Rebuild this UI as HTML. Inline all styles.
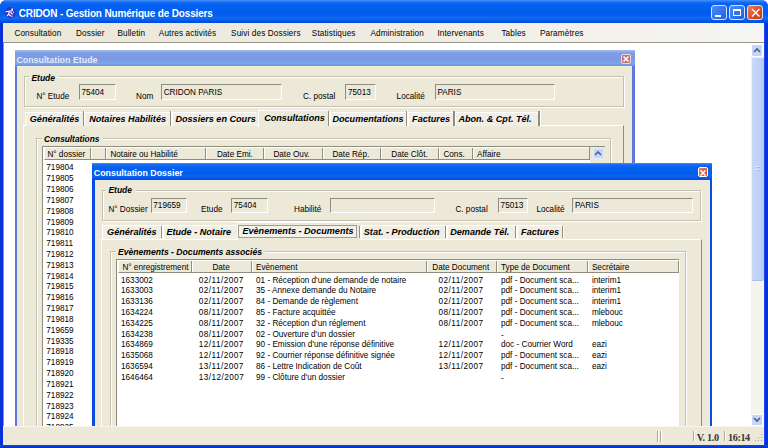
<!DOCTYPE html>
<html><head><meta charset="utf-8">
<style>
*{margin:0;padding:0;box-sizing:border-box}
html,body{width:768px;height:448px;overflow:hidden;background:#fff}
body{position:relative;font-family:"Liberation Sans",sans-serif;font-size:8.2px;color:#000}
.a{position:absolute}
.t{position:absolute;white-space:nowrap;line-height:1}
#clip{position:absolute;left:4px;top:42px;width:760px;height:385px;overflow:hidden}
#w{position:absolute;left:0;top:0;width:768px;height:448px}
</style></head><body><div id="w">
<div class="a" style="left:0.00px;top:0.00px;width:768px;height:448px;background:#0831D9;border-radius:7px 7px 0 0"></div>
<div class="a" style="left:0.00px;top:0.00px;width:768px;height:23px;background:linear-gradient(#4A93F9 0px,#1A6DF5 2px,#0662F1 4px,#005CED 14px,#1269F3 18px,#0058E8 21px,#0049D8 23px);border-radius:6px 6px 0 0"></div>
<svg class="a" style="left:4.00px;top:6.00px" width="13" height="13"><circle cx="6.3" cy="6.5" r="5.4" fill="#3032C6"/><path d="M2 5.8L5 5.2L8.5 4.6M5.2 5.2L4.6 8.3L6.6 9.8M4.6 8.3L3.2 9.6M6.8 6.5L8.4 8.2" stroke="#fff" stroke-width="1.1" fill="none" stroke-linecap="round"/><circle cx="8.3" cy="3.2" r="0.9" fill="#fff"/><circle cx="9.6" cy="6.2" r="0.7" fill="#DDE"/><circle cx="7.8" cy="10.2" r="0.7" fill="#DDE"/></svg>
<div class="t " style="left:18.80px;top:9.20px;font-size:10px;color:#fff;font-weight:bold;letter-spacing:-0.16px">CRIDON - Gestion Numérique de Dossiers</div>
<div class="a" style="left:711.00px;top:5.00px;width:16px;height:15px;background:linear-gradient(135deg,#4C8CFA,#1F5FE0);border:1px solid #D8E4FA;border-radius:3px"></div>
<div class="a" style="left:715.00px;top:15.00px;width:6px;height:2px;background:#fff;"></div>
<div class="a" style="left:729.00px;top:5.00px;width:16px;height:15px;background:linear-gradient(135deg,#4C8CFA,#1F5FE0);border:1px solid #D8E4FA;border-radius:3px"></div>
<div class="a" style="left:733.00px;top:9.00px;width:8px;height:7px;background:transparent;border:1px solid #fff;border-top:2px solid #fff"></div>
<div class="a" style="left:747.00px;top:5.00px;width:16px;height:15px;background:linear-gradient(135deg,#EC7E5A,#DC4A22 60%,#C83C14);border:1px solid #D8E4FA;border-radius:3px"></div>
<svg class="a" style="left:750.50px;top:8.00px" width="9.5" height="9.5"><path d="M1 1L8.5 8.5M8.5 1L1 8.5" stroke="#fff" stroke-width="1.5"/></svg>
<div class="a" style="left:3.00px;top:23.00px;width:761px;height:19px;background:linear-gradient(90deg,#EBE8D8 0%,#EEECE2 45%,#F3F2EC 80%,#F5F5F4 100%);"></div>
<div class="a" style="left:3.00px;top:41.50px;width:761px;height:385px;background:#fff;border-top:1.5px solid #9A9787;border-left:1.2px solid #9A9787"></div>
<div class="t " style="left:14.40px;top:30.00px;font-size:8.2px;letter-spacing:0.12px">Consultation</div>
<div class="t " style="left:76.00px;top:30.00px;font-size:8.2px;letter-spacing:0.12px">Dossier</div>
<div class="t " style="left:117.40px;top:30.00px;font-size:8.2px;letter-spacing:0.12px">Bulletin</div>
<div class="t " style="left:158.80px;top:30.00px;font-size:8.2px;letter-spacing:0.12px">Autres activités</div>
<div class="t " style="left:231.10px;top:30.00px;font-size:8.2px;letter-spacing:0.12px">Suivi des Dossiers</div>
<div class="t " style="left:311.80px;top:30.00px;font-size:8.2px;letter-spacing:0.12px">Statistiques</div>
<div class="t " style="left:370.40px;top:30.00px;font-size:8.2px;letter-spacing:0.12px">Administration</div>
<div class="t " style="left:437.40px;top:30.00px;font-size:8.2px;letter-spacing:0.12px">Intervenants</div>
<div class="t " style="left:501.40px;top:30.00px;font-size:8.2px;letter-spacing:0.12px">Tables</div>
<div class="t " style="left:540.00px;top:30.00px;font-size:8.2px;letter-spacing:0.12px">Paramètres</div>
<div class="a" style="left:4px;top:42px;width:747px;height:385px;overflow:hidden">
<div class="a" style="left:11.00px;top:8.00px;width:620px;height:398px;background:#5E78DC;"></div>
<div class="a" style="left:11.00px;top:8.00px;width:620px;height:16px;background:linear-gradient(#A3BBF0 0px,#7F9EE7 3px,#7898E2 9px,#7BA2E8 12px,#7DA6EA 14px,#6888DC 16px);"></div>
<div class="t " style="left:12.40px;top:13.60px;font-size:8.85px;color:#E2EAFB;font-weight:bold">Consultation Etude</div>
<div class="a" style="left:617.00px;top:12.00px;width:10px;height:10px;background:#C0707E;border:1px solid #F0D8D8;border-radius:2px"></div>
<svg class="a" style="left:619.00px;top:14.00px" width="6" height="6"><path d="M0.5 0.5L5.5 5.5M5.5 0.5L0.5 5.5" stroke="#fff" stroke-width="1.5"/></svg>
<div class="a" style="left:13.00px;top:24.00px;width:615px;height:382px;background:#ECE9D8;"></div>
<div class="a" style="left:13.00px;top:24.00px;width:615px;height:1px;background:#F6F1DA;"></div>
<div class="a" style="left:19.50px;top:34.30px;width:600.5px;height:31.2px;background:transparent;border:1px solid #C4C0B2;box-shadow:inset 1px 1px 0 #fff, 1px 1px 0 #fff"></div>
<div class="a" style="left:25.00px;top:30.30px;width:30px;height:9px;background:#ECE9D8;"></div>
<div class="t " style="left:27.40px;top:31.50px;font-size:8.5px;font-weight:bold;font-style:italic;">Etude</div>
<div class="t " style="left:32.40px;top:51.30px;font-size:8.2px;">N° Etude</div>
<div class="a" style="left:75.00px;top:42.00px;width:37px;height:15.5px;background:#ECE9D8;border-top:1.5px solid #8F8C80;border-left:1.5px solid #8F8C80;border-bottom:1px solid #FFFFFF;border-right:1px solid #FFFFFF"></div>
<div class="t " style="left:77.40px;top:46.90px;font-size:8.2px;">75404</div>
<div class="t " style="left:132.10px;top:51.00px;font-size:8.2px;">Nom</div>
<div class="a" style="left:157.40px;top:42.00px;width:120.4px;height:15.5px;background:#ECE9D8;border-top:1.5px solid #8F8C80;border-left:1.5px solid #8F8C80;border-bottom:1px solid #FFFFFF;border-right:1px solid #FFFFFF"></div>
<div class="t " style="left:159.70px;top:46.90px;font-size:8.2px;">CRIDON PARIS</div>
<div class="t " style="left:299.00px;top:51.00px;font-size:8.2px;">C. postal</div>
<div class="a" style="left:341.30px;top:42.00px;width:31px;height:15.5px;background:#ECE9D8;border-top:1.5px solid #8F8C80;border-left:1.5px solid #8F8C80;border-bottom:1px solid #FFFFFF;border-right:1px solid #FFFFFF"></div>
<div class="t " style="left:344.00px;top:46.90px;font-size:8.2px;">75013</div>
<div class="t " style="left:392.60px;top:51.00px;font-size:8.2px;">Localité</div>
<div class="a" style="left:430.90px;top:42.00px;width:120.5px;height:15.5px;background:#ECE9D8;border-top:1.5px solid #8F8C80;border-left:1.5px solid #8F8C80;border-bottom:1px solid #FFFFFF;border-right:1px solid #FFFFFF"></div>
<div class="t " style="left:433.40px;top:46.90px;font-size:8.2px;">PARIS</div>
<div class="a" style="left:19.00px;top:83.30px;width:601px;height:322.7px;background:transparent;border-left:1px solid #fff;border-top:1px solid #fff;border-right:1.5px solid #8F8C80"></div>
<div class="a" style="left:21.20px;top:69.50px;width:57.3px;height:14px;background:#F0EEE5;border-top:1px solid #fff;border-left:1px solid #fff"></div>
<div class="a" style="left:80.00px;top:69.50px;width:86.0px;height:14px;background:#F0EEE5;border-top:1px solid #fff;border-left:1px solid #fff"></div>
<div class="a" style="left:167.50px;top:69.50px;width:85.0px;height:14px;background:#F0EEE5;border-top:1px solid #fff;border-left:1px solid #fff"></div>
<div class="a" style="left:253.50px;top:67.50px;width:70.5px;height:17px;background:#ECE9D8;border-top:1px solid #fff;border-left:1px solid #fff"></div>
<div class="a" style="left:325.50px;top:69.50px;width:76.5px;height:14px;background:#F0EEE5;border-top:1px solid #fff;border-left:1px solid #fff"></div>
<div class="a" style="left:403.50px;top:69.50px;width:46.0px;height:14px;background:#F0EEE5;border-top:1px solid #fff;border-left:1px solid #fff"></div>
<div class="a" style="left:451.00px;top:69.50px;width:83.5px;height:14px;background:#F0EEE5;border-top:1px solid #fff;border-left:1px solid #fff"></div>
<div class="t " style="left:25.80px;top:73.20px;font-size:9.1px;font-weight:bold;font-style:italic;">Généralités</div>
<div class="a" style="left:78.50px;top:69.00px;width:1.5px;height:14.5px;background:#8F8C80;"></div>
<div class="a" style="left:80.00px;top:69.00px;width:1px;height:14.5px;background:#fff;"></div>
<div class="t " style="left:85.20px;top:73.20px;font-size:9.1px;font-weight:bold;font-style:italic;">Notaires Habilités</div>
<div class="a" style="left:165.60px;top:69.00px;width:1.5px;height:14.5px;background:#8F8C80;"></div>
<div class="a" style="left:167.10px;top:69.00px;width:1px;height:14.5px;background:#fff;"></div>
<div class="t " style="left:171.40px;top:73.20px;font-size:9.1px;font-weight:bold;font-style:italic;">Dossiers en Cours</div>
<div class="t " style="left:260.20px;top:72.00px;font-size:9.1px;font-weight:bold;font-style:italic;">Consultations</div>
<div class="a" style="left:323.50px;top:69.00px;width:1.5px;height:14.5px;background:#8F8C80;"></div>
<div class="a" style="left:325.00px;top:69.00px;width:1px;height:14.5px;background:#fff;"></div>
<div class="t " style="left:328.40px;top:73.20px;font-size:9.1px;font-weight:bold;font-style:italic;">Documentations</div>
<div class="a" style="left:401.80px;top:69.00px;width:1.5px;height:14.5px;background:#8F8C80;"></div>
<div class="a" style="left:403.30px;top:69.00px;width:1px;height:14.5px;background:#fff;"></div>
<div class="t " style="left:408.10px;top:73.20px;font-size:9.1px;font-weight:bold;font-style:italic;">Factures</div>
<div class="a" style="left:449.30px;top:69.00px;width:1.5px;height:14.5px;background:#8F8C80;"></div>
<div class="a" style="left:450.80px;top:69.00px;width:1px;height:14.5px;background:#fff;"></div>
<div class="t " style="left:454.40px;top:73.20px;font-size:9.1px;font-weight:bold;font-style:italic;">Abon. &amp; Cpt. Tél.</div>
<div class="a" style="left:534.00px;top:69.00px;width:1.5px;height:14.5px;background:#8F8C80;"></div>
<div class="a" style="left:535.50px;top:69.00px;width:1px;height:14.5px;background:#fff;"></div>
<div class="a" style="left:31.80px;top:95.60px;width:575px;height:310.4px;background:transparent;border:1px solid #C4C0B2;box-shadow:inset 1px 1px 0 #fff, 1px 1px 0 #fff"></div>
<div class="a" style="left:37.60px;top:91.60px;width:61px;height:9px;background:#ECE9D8;"></div>
<div class="t " style="left:40.00px;top:92.50px;font-size:8.3px;font-weight:bold;font-style:italic;">Consultations</div>
<div class="a" style="left:38.00px;top:104.00px;width:562.5px;height:302px;background:#fff;border-left:1.5px solid #8F8C80;border-top:1px solid #8F8C80"></div>
<div class="a" style="left:39.50px;top:105.00px;width:545px;height:13px;background:#ECE9D8;border-bottom:1.5px solid #8F8C80;border-top:1px solid #fff;border-left:1px solid #fff"></div>
<div class="a" style="left:85.80px;top:106.00px;width:1px;height:11px;background:#8F8C80;"></div>
<div class="a" style="left:86.80px;top:106.00px;width:1px;height:11px;background:#fff;"></div>
<div class="a" style="left:101.40px;top:106.00px;width:1px;height:11px;background:#8F8C80;"></div>
<div class="a" style="left:102.40px;top:106.00px;width:1px;height:11px;background:#fff;"></div>
<div class="a" style="left:201.40px;top:106.00px;width:1px;height:11px;background:#8F8C80;"></div>
<div class="a" style="left:202.40px;top:106.00px;width:1px;height:11px;background:#fff;"></div>
<div class="a" style="left:259.30px;top:106.00px;width:1px;height:11px;background:#8F8C80;"></div>
<div class="a" style="left:260.30px;top:106.00px;width:1px;height:11px;background:#fff;"></div>
<div class="a" style="left:317.50px;top:106.00px;width:1px;height:11px;background:#8F8C80;"></div>
<div class="a" style="left:318.50px;top:106.00px;width:1px;height:11px;background:#fff;"></div>
<div class="a" style="left:376.00px;top:106.00px;width:1px;height:11px;background:#8F8C80;"></div>
<div class="a" style="left:377.00px;top:106.00px;width:1px;height:11px;background:#fff;"></div>
<div class="a" style="left:434.30px;top:106.00px;width:1px;height:11px;background:#8F8C80;"></div>
<div class="a" style="left:435.30px;top:106.00px;width:1px;height:11px;background:#fff;"></div>
<div class="a" style="left:468.00px;top:106.00px;width:1px;height:11px;background:#8F8C80;"></div>
<div class="a" style="left:469.00px;top:106.00px;width:1px;height:11px;background:#fff;"></div>
<div class="a" style="left:585.50px;top:106.00px;width:1px;height:11px;background:#8F8C80;"></div>
<div class="a" style="left:586.50px;top:106.00px;width:1px;height:11px;background:#fff;"></div>
<div class="t " style="left:43.40px;top:108.50px;font-size:8.2px;">N° dossier</div>
<div class="t " style="left:106.40px;top:108.50px;font-size:8.2px;">Notaire ou Habilité</div>
<div class="t " style="left:212.90px;top:108.50px;font-size:8.2px;">Date Emi.</div>
<div class="t " style="left:269.40px;top:108.50px;font-size:8.2px;">Date Ouv.</div>
<div class="t " style="left:328.40px;top:108.50px;font-size:8.2px;">Date Rép.</div>
<div class="t " style="left:387.30px;top:108.50px;font-size:8.2px;">Date Clôt.</div>
<div class="t " style="left:439.40px;top:108.50px;font-size:8.2px;">Cons.</div>
<div class="t " style="left:473.10px;top:108.50px;font-size:8.2px;">Affaire</div>
<div class="a" style="left:585.50px;top:105.00px;width:15px;height:301px;background:#ECE9D8;"></div>
<div class="a" style="left:584.50px;top:105.00px;width:1.5px;height:13px;background:#8F8C80;"></div>
<div class="a" style="left:588.50px;top:105.50px;width:11.5px;height:11.3px;background:#C6D6FA;border:1px solid #E4ECFC;border-radius:2px"></div>
<svg class="a" style="left:590.00px;top:108.00px" width="8" height="6"><path d="M1 5L4 2L7 5" stroke="#4D6185" stroke-width="1.6" fill="none"/></svg>
<div class="t " style="left:42.30px;top:122.35px;font-size:8.2px;">719804</div>
<div class="t " style="left:42.30px;top:133.18px;font-size:8.2px;">719805</div>
<div class="t " style="left:42.30px;top:144.01px;font-size:8.2px;">719806</div>
<div class="t " style="left:42.30px;top:154.84px;font-size:8.2px;">719807</div>
<div class="t " style="left:42.30px;top:165.67px;font-size:8.2px;">719808</div>
<div class="t " style="left:42.30px;top:176.50px;font-size:8.2px;">719809</div>
<div class="t " style="left:42.30px;top:187.33px;font-size:8.2px;">719810</div>
<div class="t " style="left:42.30px;top:198.16px;font-size:8.2px;">719811</div>
<div class="t " style="left:42.30px;top:208.99px;font-size:8.2px;">719812</div>
<div class="t " style="left:42.30px;top:219.82px;font-size:8.2px;">719813</div>
<div class="t " style="left:42.30px;top:230.65px;font-size:8.2px;">719814</div>
<div class="t " style="left:42.30px;top:241.48px;font-size:8.2px;">719815</div>
<div class="t " style="left:42.30px;top:252.31px;font-size:8.2px;">719816</div>
<div class="t " style="left:42.30px;top:263.14px;font-size:8.2px;">719817</div>
<div class="t " style="left:42.30px;top:273.97px;font-size:8.2px;">719818</div>
<div class="t " style="left:42.30px;top:284.80px;font-size:8.2px;">719659</div>
<div class="t " style="left:42.30px;top:295.63px;font-size:8.2px;">719335</div>
<div class="t " style="left:42.30px;top:306.46px;font-size:8.2px;">718918</div>
<div class="t " style="left:42.30px;top:317.29px;font-size:8.2px;">718919</div>
<div class="t " style="left:42.30px;top:328.12px;font-size:8.2px;">718920</div>
<div class="t " style="left:42.30px;top:338.95px;font-size:8.2px;">718921</div>
<div class="t " style="left:42.30px;top:349.78px;font-size:8.2px;">718922</div>
<div class="t " style="left:42.30px;top:360.61px;font-size:8.2px;">718923</div>
<div class="t " style="left:42.30px;top:371.44px;font-size:8.2px;">718924</div>
<div class="t " style="left:42.30px;top:382.27px;font-size:8.2px;">718925</div>
<div class="a" style="left:88.00px;top:120.80px;width:620px;height:285.2px;background:#0A4BE0;"></div>
<div class="a" style="left:88.00px;top:120.80px;width:620px;height:16.5px;background:linear-gradient(#4A93F9 0px,#1A6DF5 1.5px,#0662F1 4px,#005EEE 11px,#0D66F2 13px,#0050DE 16.5px);"></div>
<div class="t " style="left:89.80px;top:126.80px;font-size:8.85px;color:#fff;font-weight:bold">Consultation Dossier</div>
<div class="a" style="left:694.20px;top:125.40px;width:10px;height:10px;background:linear-gradient(135deg,#E8805A,#D3461E);border:1px solid #fff;border-radius:2px"></div>
<svg class="a" style="left:696.00px;top:127.50px" width="6" height="6"><path d="M0.5 0.5L5.5 5.5M5.5 0.5L0.5 5.5" stroke="#fff" stroke-width="1.5"/></svg>
<div class="a" style="left:91.00px;top:137.50px;width:614.5px;height:268.5px;background:#ECE9D8;"></div>
<div class="a" style="left:97.50px;top:147.80px;width:599.5px;height:31px;background:transparent;border:1px solid #C4C0B2;box-shadow:inset 1px 1px 0 #fff, 1px 1px 0 #fff"></div>
<div class="a" style="left:102.00px;top:143.80px;width:30px;height:9px;background:#ECE9D8;"></div>
<div class="t " style="left:104.40px;top:144.40px;font-size:8.5px;font-weight:bold;font-style:italic;">Etude</div>
<div class="t " style="left:104.40px;top:164.30px;font-size:8.2px;">N° Dossier</div>
<div class="a" style="left:146.60px;top:155.60px;width:36.8px;height:15.2px;background:#ECE9D8;border-top:1.5px solid #8F8C80;border-left:1.5px solid #8F8C80;border-bottom:1px solid #FFFFFF;border-right:1px solid #FFFFFF"></div>
<div class="t " style="left:149.30px;top:159.90px;font-size:8.2px;">719659</div>
<div class="t " style="left:197.10px;top:164.30px;font-size:8.2px;">Etude</div>
<div class="a" style="left:227.20px;top:155.60px;width:36.5px;height:15.2px;background:#ECE9D8;border-top:1.5px solid #8F8C80;border-left:1.5px solid #8F8C80;border-bottom:1px solid #FFFFFF;border-right:1px solid #FFFFFF"></div>
<div class="t " style="left:229.80px;top:159.90px;font-size:8.2px;">75404</div>
<div class="t " style="left:290.00px;top:164.30px;font-size:8.2px;">Habilité</div>
<div class="a" style="left:326.00px;top:155.60px;width:105.2px;height:15.2px;background:#ECE9D8;border-top:1.5px solid #8F8C80;border-left:1.5px solid #8F8C80;border-bottom:1px solid #FFFFFF;border-right:1px solid #FFFFFF"></div>
<div class="t " style="left:451.40px;top:164.30px;font-size:8.2px;">C. postal</div>
<div class="a" style="left:493.70px;top:155.60px;width:30.5px;height:15.2px;background:#ECE9D8;border-top:1.5px solid #8F8C80;border-left:1.5px solid #8F8C80;border-bottom:1px solid #FFFFFF;border-right:1px solid #FFFFFF"></div>
<div class="t " style="left:496.60px;top:159.90px;font-size:8.2px;">75013</div>
<div class="t " style="left:532.40px;top:164.30px;font-size:8.2px;">Localité</div>
<div class="a" style="left:568.00px;top:155.60px;width:120.8px;height:15.2px;background:#ECE9D8;border-top:1.5px solid #8F8C80;border-left:1.5px solid #8F8C80;border-bottom:1px solid #FFFFFF;border-right:1px solid #FFFFFF"></div>
<div class="t " style="left:570.90px;top:159.90px;font-size:8.2px;">PARIS</div>
<div class="a" style="left:96.50px;top:196.70px;width:601px;height:209.3px;background:transparent;border-left:1px solid #fff;border-top:1px solid #fff;border-right:1.5px solid #8F8C80"></div>
<div class="a" style="left:97.50px;top:183.00px;width:59.5px;height:14px;background:#F0EEE5;border-top:1px solid #fff;border-left:1px solid #fff"></div>
<div class="a" style="left:158.50px;top:183.00px;width:73.0px;height:14px;background:#F0EEE5;border-top:1px solid #fff;border-left:1px solid #fff"></div>
<div class="a" style="left:233.00px;top:180.30px;width:122.5px;height:17.5px;background:#ECE9D8;border-top:1px solid #fff;border-left:1px solid #fff"></div>
<div class="a" style="left:234.30px;top:183.20px;width:119.2px;height:12.8px;background:#F3F1E9;border:1px solid #A09D8F"></div>
<div class="a" style="left:357.00px;top:183.00px;width:84.0px;height:14px;background:#F0EEE5;border-top:1px solid #fff;border-left:1px solid #fff"></div>
<div class="a" style="left:442.50px;top:183.00px;width:69.0px;height:14px;background:#F0EEE5;border-top:1px solid #fff;border-left:1px solid #fff"></div>
<div class="a" style="left:513.00px;top:183.00px;width:45.0px;height:14px;background:#F0EEE5;border-top:1px solid #fff;border-left:1px solid #fff"></div>
<div class="t " style="left:103.10px;top:186.20px;font-size:9.1px;font-weight:bold;font-style:italic;">Généralités</div>
<div class="a" style="left:156.80px;top:183.60px;width:1px;height:12.5px;background:#8F8C80;"></div>
<div class="a" style="left:157.80px;top:183.60px;width:1px;height:12.5px;background:#fff;"></div>
<div class="t " style="left:162.40px;top:186.20px;font-size:9.1px;font-weight:bold;font-style:italic;">Etude - Notaire</div>
<div class="t " style="left:238.40px;top:184.80px;font-size:9.1px;font-weight:bold;font-style:italic;">Evènements - Documents</div>
<div class="a" style="left:355.00px;top:183.60px;width:1px;height:12.5px;background:#8F8C80;"></div>
<div class="a" style="left:356.00px;top:183.60px;width:1px;height:12.5px;background:#fff;"></div>
<div class="t " style="left:359.80px;top:186.20px;font-size:9.1px;font-weight:bold;font-style:italic;">Stat. - Production</div>
<div class="a" style="left:440.60px;top:183.60px;width:1px;height:12.5px;background:#8F8C80;"></div>
<div class="a" style="left:441.60px;top:183.60px;width:1px;height:12.5px;background:#fff;"></div>
<div class="t " style="left:446.20px;top:186.20px;font-size:9.1px;font-weight:bold;font-style:italic;">Demande Tél.</div>
<div class="a" style="left:511.00px;top:183.60px;width:1px;height:12.5px;background:#8F8C80;"></div>
<div class="a" style="left:512.00px;top:183.60px;width:1px;height:12.5px;background:#fff;"></div>
<div class="t " style="left:517.10px;top:186.20px;font-size:9.1px;font-weight:bold;font-style:italic;">Factures</div>
<div class="a" style="left:557.70px;top:183.60px;width:1px;height:12.5px;background:#8F8C80;"></div>
<div class="a" style="left:558.70px;top:183.60px;width:1px;height:12.5px;background:#fff;"></div>
<div class="a" style="left:106.20px;top:208.50px;width:575.4px;height:197.5px;background:transparent;border:1px solid #C4C0B2;box-shadow:inset 1px 1px 0 #fff, 1px 1px 0 #fff"></div>
<div class="a" style="left:111.60px;top:204.50px;width:149px;height:9px;background:#ECE9D8;"></div>
<div class="t " style="left:114.00px;top:205.50px;font-size:8.62px;font-weight:bold;font-style:italic;">Evènements - Documents associés</div>
<div class="a" style="left:112.20px;top:216.80px;width:563.2px;height:189.2px;background:#fff;border-left:1.5px solid #8F8C80;border-top:1px solid #8F8C80"></div>
<div class="a" style="left:113.70px;top:217.80px;width:561px;height:13px;background:#ECE9D8;border-bottom:1.5px solid #8F8C80;border-top:1px solid #fff;border-left:1px solid #fff"></div>
<div class="a" style="left:187.20px;top:219.00px;width:1px;height:11px;background:#8F8C80;"></div>
<div class="a" style="left:188.20px;top:219.00px;width:1px;height:11px;background:#fff;"></div>
<div class="a" style="left:247.00px;top:219.00px;width:1px;height:11px;background:#8F8C80;"></div>
<div class="a" style="left:248.00px;top:219.00px;width:1px;height:11px;background:#fff;"></div>
<div class="a" style="left:422.00px;top:219.00px;width:1px;height:11px;background:#8F8C80;"></div>
<div class="a" style="left:423.00px;top:219.00px;width:1px;height:11px;background:#fff;"></div>
<div class="a" style="left:491.50px;top:219.00px;width:1px;height:11px;background:#8F8C80;"></div>
<div class="a" style="left:492.50px;top:219.00px;width:1px;height:11px;background:#fff;"></div>
<div class="a" style="left:583.40px;top:219.00px;width:1px;height:11px;background:#8F8C80;"></div>
<div class="a" style="left:584.40px;top:219.00px;width:1px;height:11px;background:#fff;"></div>
<div class="a" style="left:674.40px;top:219.00px;width:1px;height:11px;background:#8F8C80;"></div>
<div class="a" style="left:675.40px;top:219.00px;width:1px;height:11px;background:#fff;"></div>
<div class="t " style="left:118.40px;top:221.50px;font-size:8.2px;">N° enregistrement</div>
<div class="t " style="left:208.40px;top:221.50px;font-size:8.2px;">Date</div>
<div class="t " style="left:252.00px;top:221.50px;font-size:8.2px;">Evènement</div>
<div class="t " style="left:428.30px;top:221.50px;font-size:8.2px;">Date Document</div>
<div class="t " style="left:497.00px;top:221.50px;font-size:8.2px;">Type de Document</div>
<div class="t " style="left:587.90px;top:221.50px;font-size:8.2px;">Secrétaire</div>
<div class="t " style="left:117.00px;top:234.50px;font-size:8.2px;">1633002</div>
<div class="t " style="left:194.80px;top:234.50px;font-size:8.2px;letter-spacing:0.45px">02/11/2007</div>
<div class="t " style="left:252.00px;top:234.50px;font-size:8.2px;">01 - Réception d'une demande de notaire</div>
<div class="t " style="left:434.60px;top:234.50px;font-size:8.2px;letter-spacing:0.45px">02/11/2007</div>
<div class="t " style="left:497.00px;top:234.50px;font-size:8.2px;">pdf - Document sca...</div>
<div class="t " style="left:587.90px;top:234.50px;font-size:8.2px;">interim1</div>
<div class="t " style="left:117.00px;top:245.33px;font-size:8.2px;">1633003</div>
<div class="t " style="left:194.80px;top:245.33px;font-size:8.2px;letter-spacing:0.45px">02/11/2007</div>
<div class="t " style="left:252.00px;top:245.33px;font-size:8.2px;">35 - Annexe demande du Notaire</div>
<div class="t " style="left:434.60px;top:245.33px;font-size:8.2px;letter-spacing:0.45px">02/11/2007</div>
<div class="t " style="left:497.00px;top:245.33px;font-size:8.2px;">pdf - Document sca...</div>
<div class="t " style="left:587.90px;top:245.33px;font-size:8.2px;">interim1</div>
<div class="t " style="left:117.00px;top:256.16px;font-size:8.2px;">1633136</div>
<div class="t " style="left:194.80px;top:256.16px;font-size:8.2px;letter-spacing:0.45px">02/11/2007</div>
<div class="t " style="left:252.00px;top:256.16px;font-size:8.2px;">84 - Demande de règlement</div>
<div class="t " style="left:434.60px;top:256.16px;font-size:8.2px;letter-spacing:0.45px">02/11/2007</div>
<div class="t " style="left:497.00px;top:256.16px;font-size:8.2px;">pdf - Document sca...</div>
<div class="t " style="left:587.90px;top:256.16px;font-size:8.2px;">interim1</div>
<div class="t " style="left:117.00px;top:266.99px;font-size:8.2px;">1634224</div>
<div class="t " style="left:194.80px;top:266.99px;font-size:8.2px;letter-spacing:0.45px">08/11/2007</div>
<div class="t " style="left:252.00px;top:266.99px;font-size:8.2px;">85 - Facture acquittée</div>
<div class="t " style="left:434.60px;top:266.99px;font-size:8.2px;letter-spacing:0.45px">08/11/2007</div>
<div class="t " style="left:497.00px;top:266.99px;font-size:8.2px;">pdf - Document sca...</div>
<div class="t " style="left:587.90px;top:266.99px;font-size:8.2px;">mlebouc</div>
<div class="t " style="left:117.00px;top:277.82px;font-size:8.2px;">1634225</div>
<div class="t " style="left:194.80px;top:277.82px;font-size:8.2px;letter-spacing:0.45px">08/11/2007</div>
<div class="t " style="left:252.00px;top:277.82px;font-size:8.2px;">32 - Réception d'un réglement</div>
<div class="t " style="left:434.60px;top:277.82px;font-size:8.2px;letter-spacing:0.45px">08/11/2007</div>
<div class="t " style="left:497.00px;top:277.82px;font-size:8.2px;">pdf - Document sca...</div>
<div class="t " style="left:587.90px;top:277.82px;font-size:8.2px;">mlebouc</div>
<div class="t " style="left:117.00px;top:288.65px;font-size:8.2px;">1634238</div>
<div class="t " style="left:194.80px;top:288.65px;font-size:8.2px;letter-spacing:0.45px">08/11/2007</div>
<div class="t " style="left:252.00px;top:288.65px;font-size:8.2px;">02 - Ouverture d'un dossier</div>
<div class="t " style="left:497.00px;top:289.65px;font-size:8.2px;">-</div>
<div class="t " style="left:117.00px;top:299.48px;font-size:8.2px;">1634869</div>
<div class="t " style="left:194.80px;top:299.48px;font-size:8.2px;letter-spacing:0.45px">12/11/2007</div>
<div class="t " style="left:252.00px;top:299.48px;font-size:8.2px;">90 - Emission d'une réponse définitive</div>
<div class="t " style="left:434.60px;top:299.48px;font-size:8.2px;letter-spacing:0.45px">12/11/2007</div>
<div class="t " style="left:497.00px;top:299.48px;font-size:8.2px;">doc - Courrier Word</div>
<div class="t " style="left:587.90px;top:299.48px;font-size:8.2px;">eazi</div>
<div class="t " style="left:117.00px;top:310.31px;font-size:8.2px;">1635068</div>
<div class="t " style="left:194.80px;top:310.31px;font-size:8.2px;letter-spacing:0.45px">12/11/2007</div>
<div class="t " style="left:252.00px;top:310.31px;font-size:8.2px;">92 - Courrier réponse définitive signée</div>
<div class="t " style="left:434.60px;top:310.31px;font-size:8.2px;letter-spacing:0.45px">12/11/2007</div>
<div class="t " style="left:497.00px;top:310.31px;font-size:8.2px;">pdf - Document sca...</div>
<div class="t " style="left:587.90px;top:310.31px;font-size:8.2px;">eazi</div>
<div class="t " style="left:117.00px;top:321.14px;font-size:8.2px;">1636594</div>
<div class="t " style="left:194.80px;top:321.14px;font-size:8.2px;letter-spacing:0.45px">13/11/2007</div>
<div class="t " style="left:252.00px;top:321.14px;font-size:8.2px;">86 - Lettre Indication de Coût</div>
<div class="t " style="left:434.60px;top:321.14px;font-size:8.2px;letter-spacing:0.45px">13/11/2007</div>
<div class="t " style="left:497.00px;top:321.14px;font-size:8.2px;">pdf - Document sca...</div>
<div class="t " style="left:587.90px;top:321.14px;font-size:8.2px;">eazi</div>
<div class="t " style="left:117.00px;top:331.97px;font-size:8.2px;">1646464</div>
<div class="t " style="left:194.80px;top:331.97px;font-size:8.2px;letter-spacing:0.45px">13/12/2007</div>
<div class="t " style="left:252.00px;top:331.97px;font-size:8.2px;">99 - Clôture d'un dossier</div>
<div class="t " style="left:497.00px;top:332.97px;font-size:8.2px;">-</div>
</div>
<div class="a" style="left:751.00px;top:44.00px;width:13px;height:383px;background:#F5F4EF;"></div>
<div class="a" style="left:751.00px;top:44.00px;width:12px;height:13px;background:#C6D6FA;border:1px solid #fff;border-radius:2px"></div>
<svg class="a" style="left:753.00px;top:47.00px" width="8" height="6"><path d="M1 5L4 2L7 5" stroke="#4D6185" stroke-width="1.6" fill="none"/></svg>
<div class="a" style="left:751.00px;top:57.00px;width:12.5px;height:223.5px;background:linear-gradient(90deg,#C8D8FC,#B9CDF8);border:1px solid #E8EFFD;border-bottom-color:#A9BEEE;border-right-color:#B0C4F2;border-radius:2px"></div>
<div class="a" style="left:755.00px;top:165.50px;width:4px;height:1px;background:#E2EAFD;"></div>
<div class="a" style="left:755.50px;top:166.50px;width:4px;height:0.7px;background:#A8BCEC;"></div>
<div class="a" style="left:755.00px;top:168.50px;width:4px;height:1px;background:#E2EAFD;"></div>
<div class="a" style="left:755.50px;top:169.50px;width:4px;height:0.7px;background:#A8BCEC;"></div>
<div class="a" style="left:751.00px;top:414.00px;width:12px;height:12px;background:#C6D6FA;border:1px solid #fff;border-radius:2px"></div>
<svg class="a" style="left:753.00px;top:417.00px" width="8" height="6"><path d="M1 1L4 4L7 1" stroke="#4D6185" stroke-width="1.6" fill="none"/></svg>
<div class="a" style="left:3.00px;top:426.00px;width:761px;height:18.5px;background:#ECE9D8;border-top:1.5px solid #F7F5EE"></div>
<div class="a" style="left:657.00px;top:430.50px;width:1px;height:11px;background:#ACA899;"></div>
<div class="a" style="left:658.00px;top:430.50px;width:1px;height:11px;background:#fff;"></div>
<div class="a" style="left:659.50px;top:430.50px;width:1px;height:11px;background:#ACA899;"></div>
<div class="a" style="left:660.50px;top:430.50px;width:1px;height:11px;background:#fff;"></div>
<div class="a" style="left:693.00px;top:431.00px;width:1px;height:10px;background:#ACA899;"></div>
<div class="a" style="left:694.00px;top:431.00px;width:1px;height:10px;background:#fff;"></div>
<div class="a" style="left:724.00px;top:431.00px;width:1px;height:10px;background:#ACA899;"></div>
<div class="a" style="left:725.00px;top:431.00px;width:1px;height:10px;background:#fff;"></div>
<div class="t " style="left:696.80px;top:432.50px;font-size:10.2px;font-family:'Liberation Serif',serif;font-weight:bold;color:#363636;letter-spacing:-0.3px">V. 1.0</div>
<div class="t " style="left:728.00px;top:432.50px;font-size:10.2px;font-family:'Liberation Serif',serif;font-weight:bold;color:#363636;letter-spacing:-0.4px">16:14</div>
<div class="a" style="left:761.00px;top:434.00px;width:1.2px;height:1.2px;background:#A8A594;"></div>
<div class="a" style="left:758.00px;top:437.00px;width:1.2px;height:1.2px;background:#A8A594;"></div>
<div class="a" style="left:761.00px;top:437.00px;width:1.2px;height:1.2px;background:#A8A594;"></div>
<div class="a" style="left:755.00px;top:440.00px;width:1.2px;height:1.2px;background:#A8A594;"></div>
<div class="a" style="left:758.00px;top:440.00px;width:1.2px;height:1.2px;background:#A8A594;"></div>
<div class="a" style="left:761.00px;top:440.00px;width:1.2px;height:1.2px;background:#A8A594;"></div>
<div class="a" style="left:0.00px;top:444.50px;width:768px;height:3.5px;background:linear-gradient(#1048E4,#0030C0);"></div>
<div class="a" style="left:764.00px;top:23.00px;width:1.2px;height:421.5px;background:#1A4EE6;"></div>
</div></body></html>
